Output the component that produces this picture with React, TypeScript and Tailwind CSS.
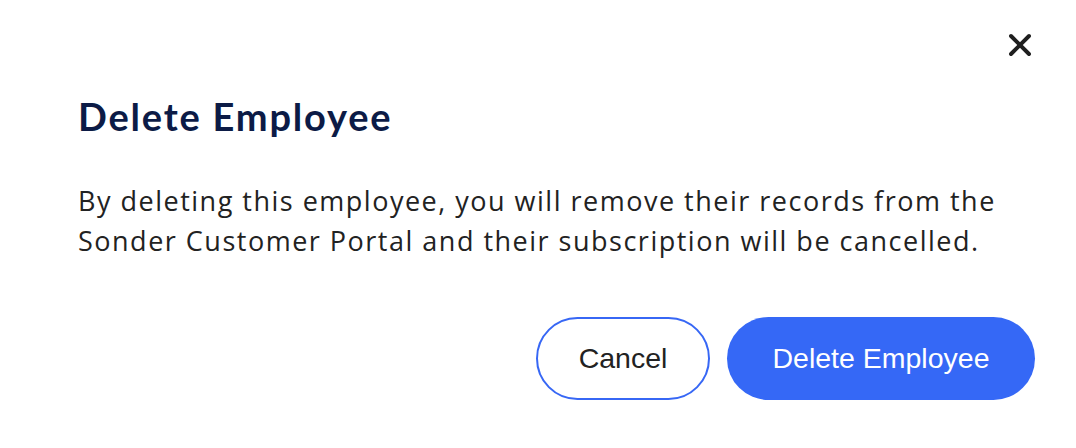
import { X } from "lucide-react";

export default function App() {
  return (
    <div className="w-[1076px] h-[448px] bg-white relative font-['Lato',sans-serif]">
      <button className="absolute top-[27px] right-[38px] text-[#1f1f1f]" aria-label="Close">
        <X className="w-[36px] h-[36px]" strokeWidth={2.6} />
      </button>

      <div className="pl-[78px] pr-[40px] pt-[92px] flex flex-col">
        <h2 className="text-[38px] leading-[48px] font-bold text-[#0c1b46] tracking-[1.8px]">
          Delete Employee
        </h2>
        <p className="mt-[41px] text-[27px] leading-[40px] text-[#222222] font-['Open_Sans',sans-serif] tracking-[1.5px] whitespace-nowrap">
          By deleting this employee, you will remove their records from the
          <br />
          Sonder Customer Portal and their subscription will be cancelled.
        </p>
        <div className="mt-[56px] flex justify-end gap-[17px] pr-[1px]">
          <button className="w-[174px] h-[83px] rounded-full border-2 border-[#3767f5] bg-white text-[28.5px] text-[#222222] font-['Liberation_Sans',sans-serif]">
            Cancel
          </button>
          <button className="w-[308px] h-[83px] rounded-full bg-[#3568f6] text-[28.5px] text-white font-['Liberation_Sans',sans-serif]">
            Delete Employee
          </button>
        </div>
      </div>
    </div>
  );
}
